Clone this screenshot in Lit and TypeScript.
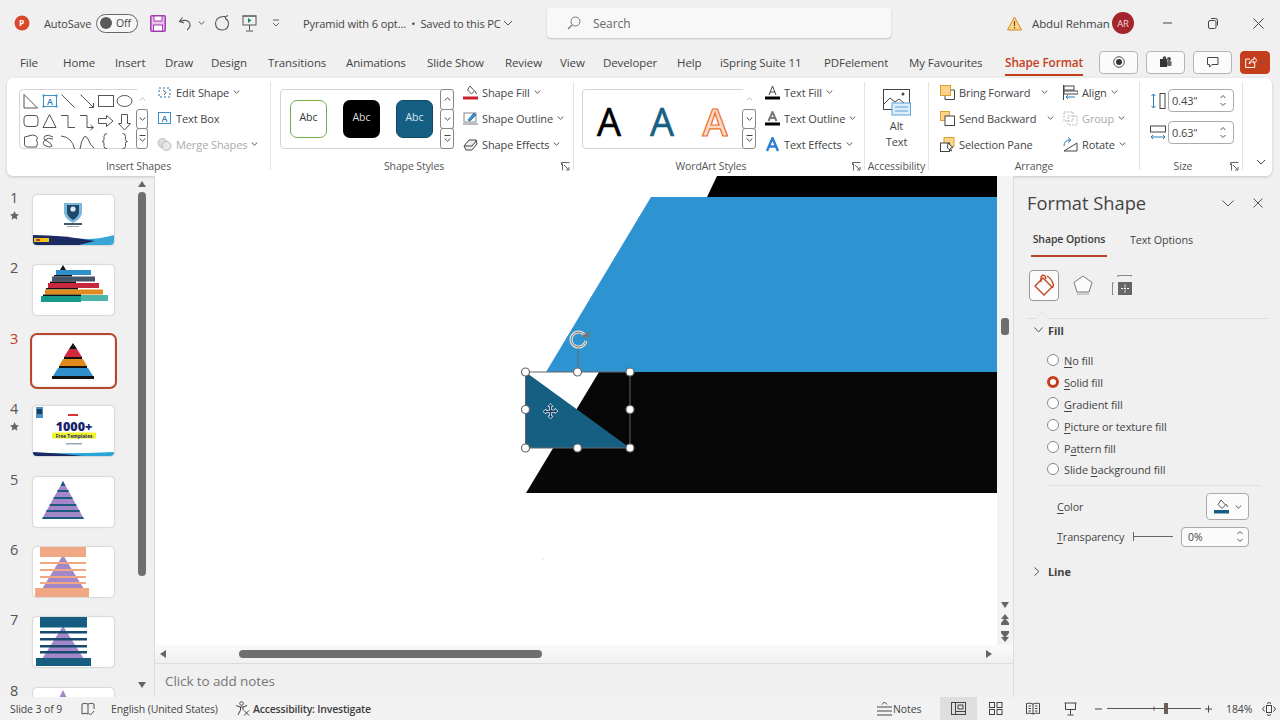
import { LitElement, html, css, svg } from "lit";
import { customElement } from "lit/decorators.js";
import { styleMap } from "lit/directives/style-map.js";

const ic = (w: number, h: number, c: unknown, vb?: string) =>
  html`<svg class="i" width=${w} height=${h} viewBox=${vb || `0 0 ${w} ${h}`} fill="none" stroke="#555" stroke-width="1">${c}</svg>`;
const chev = (cls = "") => html`<svg class="chev ${cls}" width="7" height="4" viewBox="0 0 7 4" fill="none" stroke="#555" stroke-width="1"><path d="M.7.5l2.8 2.7L6.3.5"/></svg>`;
const launcher = ic(9, 9, svg`<path d="M.5 3V.5H8.5M1.5 1.5v7h0M3 3l5 5M8 5v3H5" stroke="#666"/>`);

type Cell = [number, unknown, string?];
const cells = (items: Cell[], end: number) => items.map((it, i) => {
  const next = i + 1 < items.length ? items[i + 1][0] : end;
  return html`<div class="cell ${it[2] || ""}" style=${styleMap({ width: `${next - it[0]}px` })}>${it[1]}</div>`;
});

const hw5 = (y: number) => ((y - 4) * 21) / 38;

const thumbs: Record<number, unknown> = {
  1: svg`<path d="M31 8h18v10q-1 6-9 10-8-4-9-10z" fill="#7fb6dc"/><path d="M34 10h12v8q-1 4-6 7-5-3-6-7z" fill="#1d4a6b"/><circle cx="40" cy="14" r="2.600" fill="#dfeaf2"/>
    <rect x="31" y="28" width="18" height="2" fill="#44566a"/><rect x="34" y="31" width="12" height="1" fill="#9aa7b4"/>
    <path d="M0 42q20-2 40 1t41-3v10H0z" fill="#3aa6d8"/><path d="M0 40q30 0 62 6l-16 4H0z" fill="#1b2a63"/><rect x="1" y="43" width="15" height="4" fill="#f0c419"/><rect x="3" y="44" width="4" height="2" fill="#b33"/>`,
  2: svg`<path d="M27 5l3-5 3 5z" fill="#111"/>
    <rect x="23" y="5" width="35" height="5" fill="#2e8fcb"/><rect x="21" y="10" width="18" height="1.500" fill="#111"/>
    <rect x="19" y="11.500" width="43" height="5" fill="#44546a"/><rect x="17" y="16.500" width="26" height="1.500" fill="#111"/>
    <rect x="15" y="18" width="51" height="5" fill="#c8283e"/><rect x="13" y="23" width="32" height="1.500" fill="#111"/>
    <rect x="12" y="24.500" width="58" height="5" fill="#e18a1e"/><rect x="10" y="29.500" width="38" height="1.500" fill="#111"/>
    <rect x="8" y="31" width="40" height="6" fill="#159a8c"/><rect x="48" y="30" width="27" height="6" fill="#4bb5a8"/>`,
  3: svg`<path d="M36 13l4-6 4 6z" fill="#111"/><path d="M36 13h8l5 8H31z" fill="#d0283c"/><rect x="31" y="21" width="18" height="2" fill="#111"/>
    <path d="M30 23h20l4 7H26z" fill="#e18a1e"/><rect x="26" y="30" width="28" height="2" fill="#111"/>
    <path d="M25 32h30l5 8H20z" fill="#2e8fcb"/><rect x="19" y="40" width="42" height="3" fill="#111"/>`,
  4: svg`<rect x="3" y="1" width="7" height="11" fill="#4a90c4"/><rect x="4" y="3" width="5" height="5" fill="#1d3f66"/>
    <rect x="35" y="8" width="10" height="2" fill="#d33"/>
    <text x="41" y="25" text-anchor="middle" font-size="12.500" font-weight="800" fill="#15246b" stroke="none">1000+</text>
    <rect x="19" y="26.500" width="44" height="6" rx="1" fill="#eef227"/>
    <text x="41" y="31.500" text-anchor="middle" font-size="4.800" font-weight="700" fill="#1a2a70" stroke="none">Free Templates</text>
    <rect x="33" y="37" width="16" height="1.500" fill="#9aa3c0"/><path d="M0 47q40 1 81-1v4H0z" fill="#2aa5d8"/><path d="M0 46q25 1 50 4H0z" fill="#1b2a63"/>`,
  5: svg`<path d="M30 4L51 42H9z" fill="#a487c8"/><path d="M27.500 9L30 4l2.500 5z" fill="#155e80"/>
    ${[14, 21, 28, 34, 41].map((y) => svg`<rect x=${30 - hw5(y)} y=${y - 1} width=${2 * hw5(y)} height="2" fill="#1c5a80"/>`)}`,
  6: svg`<path d="M30 8L51 42H9z" fill="#a487c8"/>
    <rect x="7" y="0" width="46" height="10" fill="#f0a784"/>
    ${[15, 22, 29, 35].map((y) => svg`<rect x="7" y=${y} width="46" height="2" fill="#f0a784"/>`)}
    <rect x="2" y="41" width="54" height="9" fill="#f0a784"/>`,
  7: svg`<path d="M30 9L51 42H9z" fill="#a487c8"/>
    <rect x="7" y="0" width="47" height="10.500" fill="#155e80"/>
    ${[14, 21, 28, 34].map((y) => svg`<rect x="7" y=${y} width="47" height="2.500" fill="#174a6e"/>`)}
    <rect x="3" y="41" width="55" height="8" fill="#155e80"/>`,
  8: svg`<path d="M30 2l-5 10h10z" fill="#a487c8"/>`,
};

const tabs: [string, number][] = [["File", 20], ["Home", 63], ["Insert", 115], ["Draw", 165], ["Design", 211], ["Transitions", 268], ["Animations", 346], ["Slide Show", 427], ["Review", 505], ["View", 560], ["Developer", 603], ["Help", 677], ["iSpring Suite 11", 720], ["PDFelement", 824], ["My Favourites", 909]];

const shapesGrid = svg`
  <path d="M4 4.500V18h13.500z"/><rect x="23.500" y="5.500" width="13" height="11" stroke="#3d8fc9"/><text x="30" y="14.500" font-size="9" text-anchor="middle" fill="#2b7cb8" stroke="none" font-weight="600">A</text>
  <g fill="#3d8fc9" stroke="none"><rect x="22.500" y="4.500" width="2" height="2"/><rect x="35.500" y="4.500" width="2" height="2"/><rect x="22.500" y="15.500" width="2" height="2"/><rect x="35.500" y="15.500" width="2" height="2"/></g>
  <path d="M41.500 4.500l13 13M60.500 4.500l13 13M73.500 13v4.500H69"/><rect x="78.500" y="5.500" width="15" height="11"/><ellipse cx="104.500" cy="11" rx="7.500" ry="5.500"/>
  <rect x="4" y="25.500" width="14" height="11" rx="3"/><path d="M23 37.500l6.500-13 6.500 13z"/><path d="M41 25.500h7v12h7M60 25.500h7v12h6M70.500 35l3 2.500-3 2.500"/>
  <path d="M78.500 28.500h8v-3l6.500 5.500-6.500 5.500v-3h-8zM101.500 24.500h6v9h3l-6 6.500-6-6.500h3z"/>
  <path d="M4.500 47l8-2q4 0 5 3l-1 2q2 3 0 7H8q-4 0-3.500-4z"/><path d="M36 47q-5-3-8-1-3 3 2 5 4 2 5 5-2 2-6 0-5-2-1-6 3-3 8-1" transform="translate(-3 0)"/>
  <path d="M41 46q11 1 13.500 13M60 59q1-8 4-12 2-2 4 2 2 6 6 9"/>
  <path d="M87 44.500q-3 0-3 3v3q0 2-2 2 2 0 2 2v3q0 2 3 2M102.500 44.500q3 0 3 3v3q0 2 2 2-2 0-2 2v3q0 2-3 2" transform="translate(0 -1)"/>`;

const rb = (icon: unknown, label: string, opts: { dis?: boolean; ch?: boolean; far?: boolean } = {}) => html`
  <div class="rb ${opts.dis ? "dis" : ""}"><span class="ico">${icon}</span><span>${label}</span>${opts.ch === false ? "" : chev(opts.far ? "far" : "")}</div>`;

const scroller = (firstDisabled: boolean) => html`<div class="gs">
  <div class="gc ${firstDisabled ? "off" : ""}">${ic(7, 4, svg`<path d="M.7 3.500L3.500.8l2.800 2.700" stroke=${firstDisabled ? "#bbb" : "#444"}/>`)}</div>
  <div class="gc">${ic(7, 4, svg`<path d="M.7.5l2.800 2.700L6.300.5" stroke="#444"/>`)}</div>
  <div class="gc">${ic(7, 7, svg`<path d="M.5.500h6M.7 3.500l2.800 2.700 2.800-2.700" stroke="#444"/>`)}</div>
</div>`;

const spin = html`<span class="spin">${ic(6, 3, svg`<path d="M.5 3L3 .5 5.500 3" stroke="#555"/>`)}${ic(6, 3, svg`<path d="M.5 0L3 2.500 5.500 0" stroke="#555"/>`)}</span>`;

const sel: [number, number][] = [[525.5, 372], [577.5, 372], [630, 372], [525.5, 409.5], [630, 409.5], [525.5, 448], [577.5, 448], [630, 448]];

@customElement("app-root")
export class AppRoot extends LitElement {
  static styles = css`
    :host { display: block; width: 1280px; height: 720px; overflow: hidden; background: #f0f0f0; color: #444;
      font-family: "Open Sans", "Noto Sans", sans-serif; font-size: 11px; letter-spacing: -.1px; }
    * { box-sizing: border-box; }
    svg { display: block; flex: none; }
    u { text-underline-offset: 2px; text-decoration-thickness: 1px; }
    .row { display: flex; align-items: center; }
    .cell { flex: none; display: flex; align-items: center; white-space: nowrap; height: 100%; }
    .title { height: 46px; }
    .doc { font-size: 11.100px; letter-spacing: -.15px; }
    .doc i { font-style: normal; margin: 0 2.500px; }
    .user { font-size: 11.500px; }
    .tog { width: 42px; height: 19px; border: 1px solid #666; border-radius: 10px; display: flex; align-items: center; padding-left: 3px; gap: 4px; font-size: 10.5px; background: #f7f7f7; }
    .tog b { width: 12px; height: 12px; border-radius: 50%; background: #5a5a5a; }
    .search { width: 344px; height: 30px; background: #f8f8f8; border-radius: 4px; box-shadow: 0 1px 2px rgba(0,0,0,.2); display: flex; align-items: center; padding-left: 20px; gap: 12px; color: #666; font-size: 12px; }
    .av { width: 22px; height: 22px; border-radius: 50%; background: #a4262c; color: #f3d9da; display: flex; align-items: center; justify-content: center; font-size: 9.5px; }
    .tabs { height: 32px; font-size: 11.500px; }
    .active { color: #c43e1c; font-weight: 600; position: relative; font-size: 11.800px; }
    .active::after { content: ""; position: absolute; left: 0; right: 0; bottom: -6px; height: 2px; background: #c43e1c; }
    .tbtn { width: 39px; height: 23px; background: #fbfbfb; border: 1px solid #b5b5b5; border-radius: 4px; display: flex; align-items: center; justify-content: center; }
    .share { width: 30px; background: #c43e1c; border-color: #c43e1c; gap: 2px; }
    .ribbon { margin-left: 7px; width: 1265px; height: 98px; background: #fff; border-radius: 6px; box-shadow: 0 1px 3px rgba(0,0,0,.18); display: flex; }
    .sep { width: 1px; margin: 4px 0 6px; background: #e2e2e2; flex: none; }
    .grp { display: flex; flex-direction: column; flex: none; }
    .w-ins { width: 263px; } .w-sty { width: 302px; } .w-art { width: 290px; } .w-acc { width: 63px; } .w-arr { width: 210px; } .w-siz { width: 102px; }
    .body { height: 80px; padding-top: 1px; display: flex; }
    .lab { height: 16px; text-align: center; font-size: 10.500px; line-height: 16px; position: relative; color: #555; }
    .lab.lp { padding-right: 16px; }
    .lab .launch { position: absolute; right: 3px; top: 4px; }
    .p-ins { padding-left: 12px; } .p-sty { padding-left: 9px; } .p-art { padding-left: 8px; }
    .gal { margin-top: 10px; height: 60px; border: 1px solid #d4d4d4; border-radius: 4px; display: flex; background: #fff; flex: none; }
    .g-ins { width: 129px; margin-right: 9px; justify-content: space-between; }
    .g-sty { width: 174px; margin-right: 9px; justify-content: space-between; }
    .g-art { width: 174px; margin-right: 9px; justify-content: space-between; }
    .gs { width: 14px; display: flex; flex-direction: column; margin: -1px -1px -1px 0; }
    .gc { height: 21px; flex: 1; border: 1px solid #888; border-radius: 3px; margin-top: -1px; background: #fff; display: flex; align-items: center; justify-content: center; }
    .gc.off { border-color: transparent; }
    .gc:first-child { margin-top: 0; }
    .abcs { display: flex; gap: 16px; padding: 10px 0 0 9px; }
    .abc { width: 37px; height: 38px; border-radius: 7px; display: flex; align-items: center; justify-content: center; font-size: 10.500px; letter-spacing: 0; padding-bottom: 4px; }
    .a1 { border: 1.500px solid #70ad47; color: #333; background: #fff; }
    .a2 { background: #000; color: #ddd; }
    .a3 { background: #156082; border: 1.500px solid #0f4761; color: #d8e6ee; }
    .arts { display: flex; gap: 23px; padding: 7px 0 0 11px; font-size: 38px; line-height: 48px; letter-spacing: 0; }
    .arts span { width: 30px; text-align: center; }
    .art1 { color: #000; -webkit-text-stroke: .6px #000; } .art2 { color: #156082; -webkit-text-stroke: .6px #156082; }
    .art3 { color: #fbd9c6; -webkit-text-stroke: 1.200px #e97132; font-weight: 600; }
    .rows { display: flex; flex-direction: column; }
    .rb { height: 26px; display: flex; align-items: center; white-space: nowrap; gap: 4px; font-size: 11px; }
    .ico { width: 15px; display: flex; }
    .dis { color: #aaa; }
    .far { margin-left: 7px; }
    .c1 { width: 134px; padding-left: 11px; flex: none; }
    .alt { width: 63px; display: flex; flex-direction: column; align-items: center; padding-top: 10px; line-height: 16px; font-size: 11px; }
    .alt svg { margin-bottom: 2px; }
    .size { padding: 11px 0 0 10px; display: flex; flex-direction: column; gap: 9px; }
    .srow { display: flex; align-items: center; gap: 2px; height: 23px; }
    .num { width: 66px; height: 23px; border: 1px solid #aaa; border-radius: 4px; background: #fff; display: flex; align-items: center; justify-content: space-between; padding: 0 7px 0 3px; font-size: 11px; }
    .spin { display: flex; flex-direction: column; gap: 5px; }
    .coll { flex: 1; display: flex; align-items: flex-end; padding: 0 0 11px 13px; }
    .main { display: flex; height: 521px; }
    .side { width: 155px; flex: none; display: flex; border-right: 1px solid #dcdcdc; overflow: hidden; }
    .list { width: 134px; padding-top: 19px; flex: none; }
    .it { height: 70.400px; display: flex; }
    .no { width: 33px; display: flex; flex-direction: column; align-items: center; padding-right: 5px; font-size: 14.500px; line-height: 12px; margin-top: -3px; color: #555; }
    .no svg { margin-top: 7px; }
    .no.cur { color: #c0392b; }
    .th { width: 81px; height: 50px; background: #fff; border-radius: 4px; box-shadow: 0 0 2px rgba(0,0,0,.35); overflow: hidden; flex: none; }
    .th.cur { outline: 2.500px solid #b7472a; outline-offset: 1.500px; box-shadow: none; }
    .th text { letter-spacing: 0; }
    .sb { width: 20px; padding: 5px 0 0 4px; display: flex; flex-direction: column; }
    .sbt { width: 8px; height: 384px; background: #6e6e6e; border-radius: 4px; margin: 5px 0 106px; }
    .center { flex: none; width: 859px; display: flex; flex-direction: column; border-right: 1px solid #dcdcdc; }
    .top { display: flex; height: 469px; }
    .stage { width: 842px; height: 469px; background: #fff; flex: none; }
    .vs { width: 16px; display: flex; flex-direction: column; align-items: center; padding: 142px 0 3px; justify-content: space-between; background: #f3f3f3; }
    .vth { width: 8px; height: 17px; background: #6e6e6e; border-radius: 3px; }
    .va { display: flex; flex-direction: column; align-items: center; gap: 6px; }
    .hs { height: 19px; border-bottom: 1px solid #dcdcdc; display: flex; align-items: center; padding-left: 5px; background: linear-gradient(#fafafa, #f0f0f0); }
    .hth { width: 303px; height: 8px; border-radius: 4px; background: #6e6e6e; margin: 0 444px 0 73px; flex: none; }
    .notes { flex: 1; padding: 8px 0 0 10px; font-size: 13.500px; color: #777; }
    .pane { width: 266px; flex: none; padding: 0 0 0 13px; display: flex; flex-direction: column; }
    .ph { height: 54px; display: flex; align-items: center; font-size: 18.300px; color: #444; letter-spacing: 0; }
    .ph span:first-child { margin-top: -2px; }
    .ph .sp { width: 76px; }
    .ph .sp2 { width: 19px; }
    .ptabs { display: flex; height: 27px; padding-left: 4px; gap: 23px; font-size: 10.800px; }
    .ptabs span { padding-top: 2px; }
    .ptabs .on { font-weight: 600; border-bottom: 2px solid #b7472a; width: 76px; text-align: center; white-space: nowrap; color: #3c3c3c; font-size: 10.500px; }
    .picons { display: flex; align-items: center; height: 30px; margin-top: 13px; padding-left: 2px; }
    .fillbox { width: 30px; height: 31px; border: 1px solid #999; border-radius: 4px; background: #fbfbfb; display: flex; align-items: center; justify-content: center; margin-right: 14px; }
    .gapi { width: 19px; }
    .pline { height: 12px; margin: 9px 12px 0 0; }
    .sect { display: flex; align-items: center; height: 20px; font-weight: 700; font-size: 11px; gap: 5px; padding-left: 7px; margin-top: -1px; }
    .sect.ln { margin-top: 15px; gap: 8px; }
    .radios { padding: 10px 0 0 20px; display: flex; flex-direction: column; }
    .rad { height: 21.800px; display: flex; align-items: center; gap: 5px; font-size: 11px; white-space: nowrap; }
    .rad i { width: 12px; height: 12px; border: 1px solid #888; border-radius: 50%; background: #fff; flex: none; margin-top: -2px; }
    .rad i.on { border: 3.500px solid #c43e1c; }
    .hr { height: 1px; background: #e2e2e2; margin: 4px 19px 0 21px; }
    .prop { display: flex; align-items: center; padding-left: 30px; font-size: 10.800px; }
    .pcol { height: 28px; margin-top: 7px; }
    .cbtn { margin-left: auto; margin-right: 31px; width: 43px; height: 27px; border: 1px solid #aaa; border-radius: 4px; background: #fbfbfb; display: flex; align-items: center; justify-content: center; gap: 6px; }
    .ptr { height: 20px; margin-top: 6px; }
    .ptr > span:first-child { width: 76px; white-space: nowrap; flex: none; }
    .slide { width: 40px; height: 9px; border-left: 1.500px solid #666; background: linear-gradient(#666, #666) center / 100% 1px no-repeat; flex: none; }
    .pinp { width: 68px; height: 20px; margin-left: 8px; border: 1px solid #aaa; border-radius: 4px; background: #fbfbfb; display: flex; align-items: center; justify-content: space-between; padding: 0 5px 0 6px; font-size: 10.500px; }
    .status { height: 23px; background: #f2f2f2; font-size: 10.500px; }
    .hl { background: #dedede; padding-left: 11px; }
    .acc { font-weight: 600; color: #3d3d3d; font-size: 10.500px; margin-left: 3px; letter-spacing: -.2px; }
  `;

  render() {
    const titleCells: Cell[] = [
      [14, html`<svg width="16" height="16" viewBox="0 0 16 16"><circle cx="8" cy="8" r="7.500" fill="#d9482b"/><text x="7.500" y="11" text-anchor="middle" font-size="8.500" font-weight="700" fill="#fff">P</text></svg>`],
      [44, html`<span>AutoSave</span>`],
      [96, html`<div class="tog"><b></b><span>Off</span></div>`],
      [150, ic(16, 17, svg`<rect x=".8" y=".8" width="14.400" height="15.400" rx="1" stroke="#a33bb0" stroke-width="1.500" fill="#e7c6ea"/><rect x="4" y="1" width="8" height="5" fill="#fff" stroke="#a33bb0"/><rect x="3.500" y="10" width="9" height="6" fill="#fff" stroke="#a33bb0"/>`)],
      [178, ic(15, 15, svg`<path d="M4.500 1.500L1.500 5.500l4.500 1.500M2 5.500q6-2.500 9 .5 3 4-2 8" stroke="#555" stroke-width="1.100"/>`)],
      [198, chev()],
      [214, ic(16, 16, svg`<path d="M11 1.500q-9-.5-9.500 7 .5 6.500 6.500 6.500 6 0 6.500-6 0-3-2-5M14 .5L11 2l1.500 3" stroke="#555" stroke-width="1.100"/>`)],
      [242, ic(15, 17, svg`<rect x="1" y="1" width="13" height="9" stroke="#555"/><path d="M.5 1h14M7.500 10v5M4 16h7"/><path d="M6 3l3.500 2.500L6 8z" fill="#1b8a5a" stroke="none"/>`)],
      [272, ic(8, 8, svg`<path d="M1 1h6M1 4l3 3 3-3" stroke="#666"/>`)],
      [303, html`<span class="doc">Pyramid with 6 opt... <i>•</i> Saved to this PC</span>`],
      [503, ic(10, 6, svg`<path d="M1 1l4 4 4-4"/>`)],
      [547, html`<div class="search">${ic(14, 14, svg`<circle cx="8.500" cy="5.500" r="4.500" stroke="#777"/><path d="M5 9l-4 4" stroke="#777" stroke-width="1.300"/>`)}<span>Search</span></div>`],
      [1007, ic(15, 15, svg`<path d="M7.500 1L14.500 14H.5z" fill="#f8d98a" stroke="#d9892a"/><path d="M7.500 5v5M7.500 11v1.500" stroke="#7a4a10" stroke-width="1.200"/>`)],
      [1032, html`<span class="user">Abdul Rehman</span>`],
      [1112, html`<div class="av">AR</div>`],
      [1162, ic(12, 2, svg`<path d="M1 1h9" stroke="#444"/>`)],
      [1208, ic(10, 11, svg`<rect x=".5" y="2.500" width="7.500" height="8" rx="1.500" stroke="#444"/><path d="M3 .5h4.500q2 0 2 2v5" stroke="#444"/>`)],
      [1253, ic(11, 11, svg`<path d="M.5.5l10 10M10.500.5l-10 10" stroke="#444"/>`)],
    ];
    const tabCells: Cell[] = [
      ...tabs.map(([t, x]) => [x, html`<span>${t}</span>`] as Cell),
      [1005, html`<span class="active">Shape Format</span>`],
      [1099, html`<div class="tbtn">${ic(12, 12, svg`<circle cx="6" cy="6" r="5.300" stroke="#555"/><circle cx="6" cy="6" r="3" fill="#333" stroke="none"/>`)}</div>`],
      [1146, html`<div class="tbtn">${ic(13, 12, svg`<rect x="1" y="3" width="7" height="8" fill="#333" stroke="none"/><circle cx="10" cy="3" r="2" fill="#555" stroke="none"/><rect x="8" y="5" width="4.500" height="5" rx="1" fill="#666" stroke="none"/><circle cx="5.500" cy="2" r="1.800" fill="#444" stroke="none"/>`)}</div>`],
      [1193, html`<div class="tbtn">${ic(12, 11, svg`<path d="M.5.5h10.500v7H5l-2.500 2.500V7.500H.5z" stroke="#444"/>`)}</div>`],
      [1240, html`<div class="tbtn share">${ic(12, 12, svg`<path d="M5 3H.7v8.500h9V7M4 8q1-4.500 5-4.500V1l3 3.500L9 7.500V5.500q-3 0-5 2.500z" stroke="#fff"/>`)}${chev()}</div>`],
    ];
    const statusCells: Cell[] = [
      [10, html`<span>Slide 3 of 9</span>`],
      [81, ic(14, 14, svg`<path d="M1 2q3-1.500 6 0v10q-3-1.500-6 0zM7 2q3-1.500 6 0v5M7.500 11l2 2 3.500-4" stroke="#555"/>`)],
      [111, html`<span>English (United States)</span>`],
      [235, html`${ic(15, 15, svg`<circle cx="6.500" cy="2.500" r="1.800"/><path d="M1 4.500l4 1.500h3l4-1.500M5.500 6v3l-2.500 5M8 6v3M9 9.500l5 5M14 9.500l-5 5" stroke="#444"/>`)}<span class="acc">Accessibility: Investigate</span>`],
      [876, html`${ic(17, 15, svg`<path d="M6 3.500L8.500 1 11 3.500M1 6h15M1 10h15M1 14h15" stroke="#444"/>`)}<span>Notes</span>`],
      [940, ic(15, 13, svg`<rect x=".5" y=".5" width="14" height="12" stroke="#444"/><path d="M4.500.5v12M4.500 9.500h10M7 3h5v4H7z" stroke="#444"/>`), "hl"],
      [977, html``],
      [989, ic(14, 13, svg`<rect x=".5" y=".5" width="5" height="5" stroke="#444"/><rect x="8" y=".5" width="5" height="5" stroke="#444"/><rect x=".5" y="7.500" width="5" height="5" stroke="#444"/><rect x="8" y="7.500" width="5" height="5" stroke="#444"/>`)],
      [1026, ic(14, 13, svg`<path d="M7 2q-3-1.500-6.500-.5v10q3.500-1 6.500.5 3-1.500 6.500-.5v-10q-3.500-1-6.500.5zM7 2v10M2.500 4h2.500M2.500 6.500h2.500M2.500 9h2.500M9 4h2.500M9 6.500h2.500M9 9h2.500" stroke="#444"/>`)],
      [1064, ic(13, 14, svg`<path d="M.5 1h12M1.500 1v6.500h10V1M6.500 7.500v5M3.500 13h6" stroke="#444"/>`)],
      [1095, ic(8, 2, svg`<path d="M0 1h7" stroke="#444"/>`)],
      [1107, ic(95, 11, svg`<path d="M0 5.500h94M47 3.500v4" stroke="#555"/><rect x="57" y="0" width="4" height="11" fill="#6b5f5b" stroke="none"/>`)],
      [1205, ic(8, 8, svg`<path d="M0 4h7M3.500.5v7" stroke="#444"/>`)],
      [1226, html`<span>184%</span>`],
      [1262, ic(14, 14, svg`<rect x="4.500" y="3.500" width="5" height="7" stroke="#444"/><path d="M2.500 4.500L.5 7l2 2.500M11.500 4.500l2 2.500-2 2.500M5 1.500L7 .5l2 1M5 12.500l2 1 2-1" stroke="#444"/>`)],
    ];

    return html`
      <div class="row title">${cells([[0, html``] as Cell, ...titleCells], 1280)}</div>
      <div class="row tabs">${cells([[0, html``] as Cell, ...tabCells], 1275)}</div>

      <div class="ribbon">
        <div class="grp w-ins">
          <div class="body p-ins">
            <div class="gal g-ins">
              ${ic(116, 61, shapesGrid)}
              ${scroller(true)}
            </div>
            <div class="rows">
              ${rb(ic(15, 13, svg`<rect x="2" y="2" width="11" height="9" stroke="#1e6fb0" stroke-dasharray="2 2"/><path d="M6 4l3 2.500L7 9" stroke="#555"/>`), "Edit Shape")}
              ${rb(ic(15, 14, svg`<rect x="1.500" y="1.500" width="12" height="11" stroke="#3d8fc9"/><text x="7.500" y="10.500" font-size="9" font-weight="600" text-anchor="middle" fill="#2b7cb8" stroke="none">A</text>`), "Text Box", { ch: false })}
              ${rb(ic(15, 14, svg`<circle cx="5.500" cy="6" r="4.500" fill="#ddd" stroke="#bbb"/><circle cx="9.500" cy="9" r="4.500" fill="#e8e8e8" stroke="#bbb"/>`), "Merge Shapes", { dis: true })}
            </div>
          </div>
          <div class="lab">Insert Shapes</div>
        </div>
        <div class="sep"></div>
        <div class="grp w-sty">
          <div class="body p-sty">
            <div class="gal g-sty">
              <div class="abcs"><div class="abc a1">Abc</div><div class="abc a2">Abc</div><div class="abc a3">Abc</div></div>
              ${scroller(false)}
            </div>
            <div class="rows">
              ${rb(ic(15, 15, svg`<path d="M7 1l4.500 5-3 3-4-4zM12 6l1.500 3" stroke="#555"/><rect x="0" y="11.500" width="15" height="3" fill="#c8202c" stroke="none"/>`), "Shape Fill")}
              ${rb(ic(15, 15, svg`<rect x="1" y="2" width="12" height="9" stroke="#888"/><path d="M5 9l6-7 2 2-6 6z" fill="#3d8fc9" stroke="#2b7cb8"/><rect x="0" y="12" width="15" height="2" fill="#bbb" stroke="none"/>`), "Shape Outline")}
              ${rb(ic(15, 13, svg`<path d="M1 8l5-6h7l1 4-5 6H3z" fill="#eee" stroke="#444"/><path d="M1 8h8l5-6" stroke="#444"/>`), "Shape Effects")}
            </div>
          </div>
          <div class="lab lp">Shape Styles<span class="launch">${launcher}</span></div>
        </div>
        <div class="sep"></div>
        <div class="grp w-art">
          <div class="body p-art">
            <div class="gal g-art">
              <div class="arts"><span class="art1">A</span><span class="art2">A</span><span class="art3">A</span></div>
              ${scroller(true)}
            </div>
            <div class="rows">
              ${rb(html`<svg width="15" height="15" viewBox="0 0 15 15" fill="none"><path d="M4 10L7.500 1 11 10M5 7h5" stroke="#444"/><rect y="11.500" width="15" height="3" fill="#000"/></svg>`, "Text Fill")}
              ${rb(html`<svg width="15" height="15" viewBox="0 0 15 15" fill="none"><path d="M3.500 10L7.500 1l4 9M5.500 7h4" stroke="#777" stroke-width="2"/><rect y="11.500" width="15" height="3" fill="#000"/></svg>`, "Text Outline")}
              ${rb(html`<svg width="15" height="15" viewBox="0 0 15 15" fill="none"><path d="M2 14L7.500 1 13 14M4.500 9.500h6" stroke="#2f7fd0" stroke-width="2.400"/></svg>`, "Text Effects")}
            </div>
          </div>
          <div class="lab lp">WordArt Styles<span class="launch">${launcher}</span></div>
        </div>
        <div class="sep"></div>
        <div class="grp w-acc">
          <div class="body">
            <div class="alt">
              ${ic(28, 27, svg`<rect x=".5" y=".5" width="26" height="20" stroke="#444"/><path d="M1 15l6-6 5 4 4-3 5 4" stroke="#444"/><circle cx="20" cy="5" r="1.500" fill="#444" stroke="none"/><rect x="9" y="14" width="18.500" height="12" fill="#ddeefa" stroke="#5aa2d8"/><path d="M12 18h13M12 22h13" stroke="#5aa2d8"/>`)}
              <span>Alt</span><span>Text</span>
            </div>
          </div>
          <div class="lab">Accessibility</div>
        </div>
        <div class="sep"></div>
        <div class="grp w-arr">
          <div class="body">
            <div class="rows c1">
              ${rb(ic(15, 15, svg`<rect x=".5" y=".5" width="10" height="10" fill="#fbd38d" stroke="#e0a030"/><path d="M11 5h3.500v9.500H5V11" stroke="#444"/>`), "Bring Forward", { far: true })}
              ${rb(ic(15, 15, svg`<rect x=".5" y=".5" width="9" height="9" fill="#fbd38d" stroke="#e0a030"/><rect x="5" y="5" width="9.500" height="9.500" fill="#fff" stroke="#444"/>`), "Send Backward", { far: true })}
              ${rb(ic(15, 15, svg`<rect x="4" y=".5" width="10" height="9" fill="#fbd38d" stroke="#e0a030"/><rect x=".5" y="6" width="9" height="8.500" fill="#fff" stroke="#444"/><path d="M8 6l5 4.500-2.500.5 1 3-4-3z" fill="#fff" stroke="#444"/>`), "Selection Pane", { ch: false })}
            </div>
            <div class="rows">
              ${rb(ic(15, 15, svg`<path d="M.5 0v15" stroke="#444"/><rect x="1" y="1" width="10" height="4" stroke="#444"/><rect x="1" y="6" width="14" height="3" stroke="#444"/><path d="M12 12H3M5 10l-2 2 2 2" stroke="#2b7cb8"/>`), "Align")}
              ${rb(ic(15, 15, svg`<rect x="1" y="1" width="9" height="9" stroke="#bbb" stroke-dasharray="2 1"/><rect x="5" y="5" width="9" height="9" stroke="#bbb" stroke-dasharray="2 1"/>`), "Group", { dis: true })}
              ${rb(ic(15, 15, svg`<path d="M1 14l13-8v8z" stroke="#444"/><path d="M1 9q0-6 6-6M5 .5L8 3 5 5.500" stroke="#2b7cb8"/>`), "Rotate")}
            </div>
          </div>
          <div class="lab">Arrange</div>
        </div>
        <div class="sep"></div>
        <div class="grp w-siz">
          <div class="body size">
            <div class="srow">
              ${ic(16, 16, svg`<rect x="10" y=".5" width="5" height="15" stroke="#444"/><path d="M3.500 1v14M1.500 3l2-2 2 2M1.500 13l2 2 2-2" stroke="#2b7cb8"/>`)}
              <div class="num"><span>0.43"</span>${spin}</div>
            </div>
            <div class="srow">
              ${ic(16, 16, svg`<rect x=".5" y="1" width="15" height="6" stroke="#444"/><path d="M1 12h14M3 10l-2 2 2 2M13 10l2 2-2 2" stroke="#2b7cb8"/>`)}
              <div class="num"><span>0.63"</span>${spin}</div>
            </div>
          </div>
          <div class="lab lp">Size<span class="launch">${launcher}</span></div>
        </div>
        <div class="sep"></div>
        <div class="coll">${ic(10, 6, svg`<path d="M1 1l4 4 4-4" stroke="#444"/>`)}</div>
      </div>

      <div class="main">
        <div class="side">
          <div class="list">
            ${[1, 2, 3, 4, 5, 6, 7, 8].map((n) => html`
              <div class="it">
                <div class="no ${n === 3 ? "cur" : ""}">${n}${n === 1 || n === 4 ? ic(9, 9, svg`<path d="M4.500 0l1.400 3 3.100.4-2.300 2.100.6 3.200-2.800-1.600L1.700 8.700l.6-3.200L0 3.400 3.100 3z" fill="#666" stroke="none"/>`) : ""}</div>
                <div class="th ${n === 3 ? "cur" : ""}"><svg width="81" height="50" viewBox="0 0 81 50">${thumbs[n]}</svg></div>
              </div>`)}
          </div>
          <div class="sb">
            ${ic(8, 6, svg`<path d="M4 0l4 6H0z" fill="#666" stroke="none"/>`)}
            <div class="sbt"></div>
            ${ic(8, 6, svg`<path d="M0 0h8L4 6z" fill="#666" stroke="none"/>`)}
          </div>
        </div>

        <div class="center">
          <div class="top">
            <div class="stage">
              <svg width="842" height="469" viewBox="155 176 842 469">
                <path d="M717 176H997V197H707z" fill="#000"/>
                <path d="M651 197H997V372H546z" fill="#2e93d1"/>
                <path d="M599 372H997V493H526z" fill="#070707"/>
                <path d="M525.500 372V448H630z" fill="#156082"/>
                <path d="M525.500 372H630V448H525.500zM578 372V347" fill="none" stroke="#666" stroke-width="1"/>
                <path d="M584.200 334.700A7.500 7.500 0 1 0 585.900 340.800" fill="none" stroke="#efe3dc" stroke-width="3"/>
                <path d="M584.200 334.700A7.500 7.500 0 1 0 585.900 340.800" fill="none" stroke="#777" stroke-width="1"/>
                <path d="M581 336.500l8 1.500 .5-7z" fill="#777"/>
                ${sel.map(([x, y]) => svg`<circle cx=${x} cy=${y} r="4" fill="#fff" stroke="#666" stroke-width="1.200"/>`)}
                <path d="M550.500 404l2.500 3h-1.500v3.500h3.500v-1.500l3 2.500-3 2.500V413h-3.500v3.500h1.500l-2.500 3-2.500-3h1.500V413H546v1.500l-3-2.500 3-2.500v1.500h3.500V407H548z" transform="translate(0 -.5)" fill="#15385c" stroke="#dfe9f2" stroke-width=".8"/>
                <circle cx="543" cy="559" r=".5" fill="#bbb"/>
              </svg>
            </div>
            <div class="vs">
              <div class="vth"></div>
              <div class="va">
                ${ic(10, 6, svg`<path d="M1 0h8L5 6z" fill="#666" stroke="none"/>`)}
                ${ic(10, 11, svg`<path d="M5 0l4 5H1zM5 4l4 5H1z" fill="#666" stroke="none"/><rect x="1" y="9" width="8" height="2" fill="#666" stroke="none"/>`)}
                ${ic(10, 11, svg`<rect x="1" y="0" width="8" height="2" fill="#666" stroke="none"/><path d="M1 2h8L5 7zM1 6h8l-4 5z" fill="#666" stroke="none"/>`)}
              </div>
            </div>
          </div>
          <div class="hs">
            ${ic(6, 8, svg`<path d="M6 0v8L0 4z" fill="#666" stroke="none"/>`)}
            <div class="hth"></div>
            ${ic(6, 8, svg`<path d="M0 0v8l6-4z" fill="#666" stroke="none"/>`)}
          </div>
          <div class="notes">Click to add notes</div>
        </div>

        <div class="pane">
          <div class="ph"><span>Format Shape</span><span class="sp"></span>${ic(12, 7, svg`<path d="M.5.5L6 6l5.500-5.500"/>`)}<span class="sp2"></span>${ic(10, 10, svg`<path d="M.5.5l9 9M9.500.5l-9 9"/>`)}</div>
          <div class="ptabs"><span class="on">Shape Options</span><span>Text Options</span></div>
          <div class="picons">
            <div class="fillbox">${ic(24, 24, svg`<path d="M3 13l8-8 9 9-8 8z" stroke="#c43e1c" stroke-width="1.300"/><path d="M9 9V4q1.500-3 4-1l1 3M15 3q5 3 6.500 9l-1 3" stroke="#c43e1c" stroke-width="1.300"/>`)}</div>
            ${ic(20, 20, svg`<path d="M10 1l9 6.500-3 9.500H4L1 7.500z" stroke="#777" fill="#fbfbfb"/><path d="M4 19h12" stroke="#aaa"/>`)}
            <span class="gapi"></span>
            ${ic(20, 20, svg`<path d="M.5 8v12M0 8h2M0 20h2M6 .5h14M6 0v2M20 0v2" stroke="#888"/><rect x="6" y="7" width="14" height="13" fill="#666" stroke="none"/><path d="M13 9.500v8M9 13.500h8" stroke="#fff" stroke-dasharray="2 1"/>`)}
          </div>
          <svg class="pline" width="241" height="12" viewBox="0 0 241 12"><path d="M0 9.500H9L15 3.500 21 9.500H241" fill="none" stroke="#dedede"/></svg>
          <div class="sect">${ic(9, 6, svg`<path d="M.5.500L4.500 5l4-4.500"/>`)}<span>Fill</span></div>
          <div class="radios">
            <div class="rad"><i></i><span><u>N</u>o fill</span></div>
            <div class="rad"><i class="on"></i><span><u>S</u>olid fill</span></div>
            <div class="rad"><i></i><span><u>G</u>radient fill</span></div>
            <div class="rad"><i></i><span><u>P</u>icture or texture fill</span></div>
            <div class="rad"><i></i><span>P<u>a</u>ttern fill</span></div>
            <div class="rad"><i></i><span>Slide <u>b</u>ackground fill</span></div>
          </div>
          <div class="hr"></div>
          <div class="prop pcol"><span><u>C</u>olor</span>
            <div class="cbtn">${ic(15, 15, svg`<path d="M7 1l4.500 5-3.500 3.500-4-4zM12 5l1.500 3" stroke="#555"/><rect y="11" width="15" height="3.500" fill="#156082" stroke="none"/>`)}${chev()}</div>
          </div>
          <div class="prop ptr"><span><u>T</u>ransparency</span><div class="slide"></div>
            <div class="pinp"><span>0%</span>${spin}</div>
          </div>
          <div class="sect ln">${ic(6, 9, svg`<path d="M.5.500L5 4.500l-4.500 4"/>`)}<span>Line</span></div>
        </div>
      </div>

      <div class="row status">${cells([[0, html``] as Cell, ...statusCells], 1280)}</div>
    `;
  }
}
